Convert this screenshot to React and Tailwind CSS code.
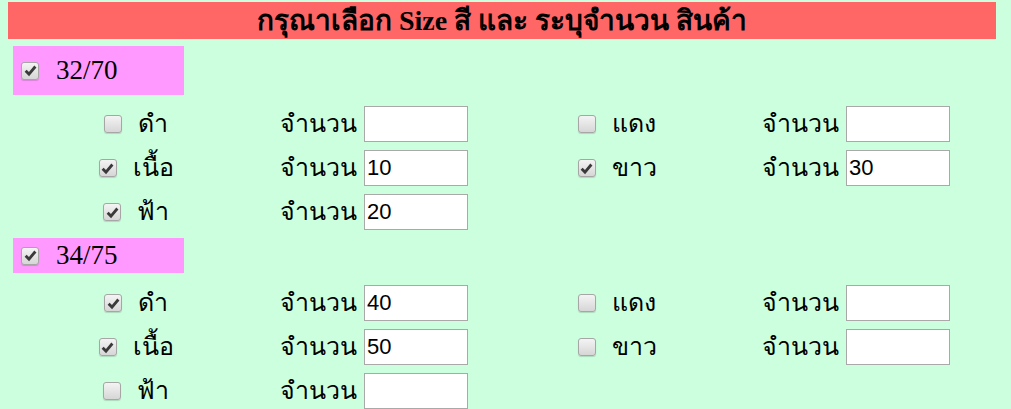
// App.jsx
const sizes = [
  {
    label: '32/70',
    tall: true,
    rows: [
      [{ name: 'ดำ', on: false, qty: '' }, { name: 'แดง', on: false, qty: '' }],
      [{ name: 'เนื้อ', on: true, qty: '10' }, { name: 'ขาว', on: true, qty: '30' }],
      [{ name: 'ฟ้า', on: true, qty: '20' }, null],
    ],
  },
  {
    label: '34/75',
    tall: false,
    rows: [
      [{ name: 'ดำ', on: true, qty: '40' }, { name: 'แดง', on: false, qty: '' }],
      [{ name: 'เนื้อ', on: true, qty: '50' }, { name: 'ขาว', on: false, qty: '' }],
      [{ name: 'ฟ้า', on: false, qty: '' }, null],
    ],
  },
];

const Check = ({ on }) => (
  <span className="inline-flex items-center justify-center w-[18px] h-[18px] shrink-0 rounded-[3px] border border-[#a6a6a6] bg-gradient-to-b from-[#f4f4f4] to-[#d6d6d6] shadow-[0_1px_1px_rgba(0,0,0,0.15)]">
    {on && (
      <svg width="13" height="13" viewBox="0 0 12 12">
        <path d="M1.5 6.2 L4.6 9.3 L10.5 2.3" fill="none" stroke="#3a3a3a" strokeWidth="2.6" />
      </svg>
    )}
  </span>
);

const Qty = ({ value }) => (
  <input
    type="text"
    readOnly
    value={value}
    className="w-[104px] h-[36px] bg-white border border-[#a9a9a9] px-[2px] text-[22px] text-black font-['Liberation_Sans',sans-serif] outline-none"
  />
);

const ColorCell = ({ item, right }) => (
  <>
    <div className={`flex items-center justify-center gap-[16px] ${right ? 'pr-[12px]' : ''}`}>
      <Check on={item.on} />
      <span className="text-[25px]">{item.name}</span>
    </div>
    <div className={`flex items-center gap-[7px] ${right ? 'pl-[11px]' : 'pl-[16px]'}`}>
      <span className="text-[25px]">จำนวน</span>
      <Qty value={item.qty} />
    </div>
  </>
);

const SizeGroup = ({ group, first }) => (
  <div>
    <div
      className={`flex items-center gap-[17px] ml-[5px] w-[171px] bg-[#ff99ff] pl-[8px] ${
        group.tall ? 'h-[49px] mt-[7px]' : 'h-[35px] mt-[4px]'
      }`}
    >
      <Check on />
      <span className="text-[27px] font-['Liberation_Serif',serif]">{group.label}</span>
    </div>
    <div className={first ? 'mt-[7px]' : 'mt-[8px]'}>
      {group.rows.map((row, i) => (
        <div key={i} className="grid grid-cols-[256px_231px_256px_1fr] h-[44px] items-center">
          <ColorCell item={row[0]} />
          {row[1] ? (
            <ColorCell item={row[1]} right />
          ) : (
            <>
              <div />
              <div />
            </>
          )}
        </div>
      ))}
    </div>
  </div>
);

export default function App() {
  return (
    <div className="min-h-screen bg-[#ccffdd] text-black font-['Liberation_Sans',sans-serif] pt-[2px] px-[8px] pb-[20px]">
      <div className="h-[37px] bg-[#ff6666] flex items-center justify-center w-[988px]">
        <h1 className="text-[28px] font-bold font-['Liberation_Serif',serif] leading-none">
          กรุณาเลือก Size สี และ ระบุจำนวน สินค้า
        </h1>
      </div>
      {sizes.map((g, i) => (
        <SizeGroup key={g.label} group={g} first={i === 0} />
      ))}
    </div>
  );
}
